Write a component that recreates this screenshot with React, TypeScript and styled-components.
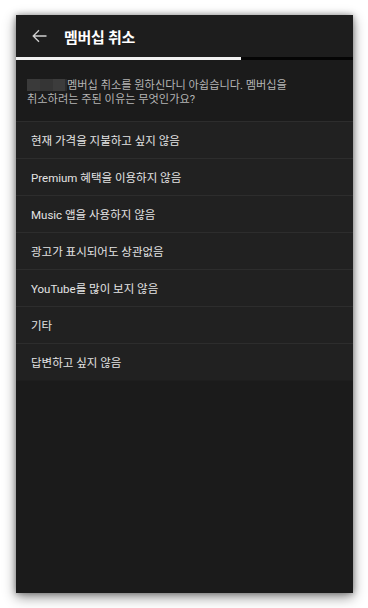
import React from "react";
import styled, { createGlobalStyle } from "styled-components";

const Global = createGlobalStyle`
  html, body { margin: 0; padding: 0; background: #ffffff; }
  body { font-family: Roboto, "Noto Sans CJK KR", "Noto Sans", sans-serif; }
`;

const Page = styled.div`
  width: 368px;
  height: 608px;
  padding: 15px 15px 15px 16px;
  box-sizing: border-box;
  display: flex;
`;

const Phone = styled.div`
  flex: 1;
  background: #1b1b1b;
  display: flex;
  flex-direction: column;
  box-shadow: 0 4px 12px rgba(0, 0, 0, 0.45), 0 0 6px rgba(0, 0, 0, 0.35);
  overflow: hidden;
`;

const Header = styled.div`
  height: 42px;
  background: #1d1d1d;
  display: flex;
  align-items: center;
  padding-left: 16px;
`;

const BackButton = styled.div`
  flex: none;
  width: 15px;
  height: 16px;
  display: flex;
  align-items: center;
  justify-content: center;
`;

const Title = styled.h1`
  margin: 0 0 0 17px;
  font-size: 15px;
  font-weight: 700;
  color: #ffffff;
  letter-spacing: -0.3px;
`;

const Progress = styled.div`
  height: 3px;
  background: #050505;
  display: flex;
`;

const ProgressFill = styled.div`
  background: #f2f2f2;
  height: 100%;
`;

const Intro = styled.p`
  margin: 0;
  padding: 19px 8px 14px 11px;
  font-size: 11.2px;
  line-height: 14px;
  color: #b4b4b4;
`;

const Blur = styled.span`
  display: inline-block;
  width: 40px;
  height: 12px;
  vertical-align: -2px;
  background: linear-gradient(
    90deg,
    #3a3a3a 0 13px,
    #353535 13px 26px,
    #3c3c3c 26px 38px,
    #2c2c2c 38px 40px
  );
`;

const List = styled.ul`
  margin: 0;
  padding: 0;
  list-style: none;
  background: #212121;
`;

const Item = styled.li`
  height: 36px;
  border-top: 1px solid #2d2d2d;
  display: flex;
  align-items: center;
  padding-left: 15px;
  font-size: 11.5px;
  color: #e4e4e4;
  &:last-child {
    border-bottom: 1px solid #1e1e1e;
  }
`;

const reasons = [
  "현재 가격을 지불하고 싶지 않음",
  "Premium 혜택을 이용하지 않음",
  "Music 앱을 사용하지 않음",
  "광고가 표시되어도 상관없음",
  "YouTube를 많이 보지 않음",
  "기타",
  "답변하고 싶지 않음",
];

export default function App() {
  const progress = 225 / 337;
  return (
    <>
      <Global />
      <Page>
        <Phone>
          <Header>
            <BackButton>
              <svg width="15" height="14" viewBox="0 0 15 14" fill="none">
                <path
                  d="M14.5 7H1.2M7 1.2L1.2 7L7 12.8"
                  stroke="#d0d0d0"
                  strokeWidth="1.3"
                />
              </svg>
            </BackButton>
            <Title>멤버십 취소</Title>
          </Header>
          <Progress>
            <ProgressFill style={{ width: `${progress * 100}%` }} />
          </Progress>
          <Intro>
            <Blur />
            멤버십 취소를 원하신다니 아쉽습니다. 멤버십을
            <br />
            취소하려는 주된 이유는 무엇인가요?
          </Intro>
          <List>
            {reasons.map((r) => (
              <Item key={r}>{r}</Item>
            ))}
          </List>
        </Phone>
      </Page>
    </>
  );
}
